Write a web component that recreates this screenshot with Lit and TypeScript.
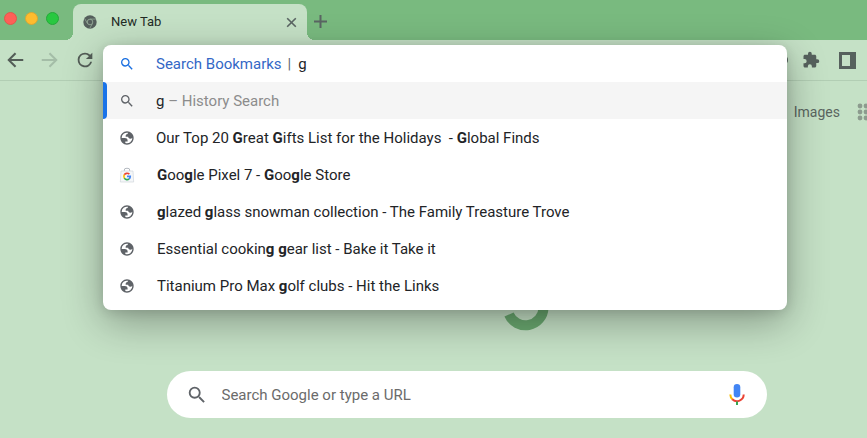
import { LitElement, html, css, svg } from "lit";
import { customElement } from "lit/decorators.js";

type Part = string | { b: string };
interface Suggestion {
  icon: "globe" | "store";
  indent: boolean;
  parts: Part[];
}

const SEARCH =
  "M15.5 14h-.79l-.28-.27A6.47 6.47 0 0 0 16 9.5 6.5 6.5 0 1 0 9.5 16c1.61 0 3.09-.59 4.23-1.57l.27.28v.79l5 4.99L20.49 19l-4.99-5zm-6 0C7.01 14 5 11.99 5 9.5S7.01 5 9.5 5 14 7.01 14 9.5 11.99 14 9.5 14z";
const BACK = "M21 10.8H7.83l5.59-5.39L11.8 3.8 3.6 12l8.2 8.2 1.61-1.61L7.83 13.2H21z";
const FORWARD = "M12.200 3.800l-1.610 1.610 5.580 5.390H3v2.400h13.170l-5.580 5.390 1.610 1.610L20.400 12z";
const RELOAD =
  "M17.65 6.35A7.96 7.96 0 0 0 12 4a8 8 0 1 0 7.73 10h-2.08A6 6 0 1 1 12 6c1.66 0 3.14.69 4.22 1.78L13 11h7V4l-2.35 2.35z";
const PUZZLE =
  "M20.5 11H19V7c0-1.1-.9-2-2-2h-4V3.5a2.5 2.5 0 0 0-5 0V5H4c-1.1 0-2 .9-2 2v3.8h1.5a2.7 2.7 0 0 1 0 5.4H2V20c0 1.1.9 2 2 2h3.8v-1.5a2.7 2.7 0 0 1 5.4 0V22H17c1.1 0 2-.9 2-2v-4h1.5a2.5 2.5 0 0 0 0-5z";
const GLOBE =
  "M12 2c5.52 0 10 4.48 10 10s-4.48 10-10 10S2 17.52 2 12 6.48 2 12 2zM4 12h4.4c3.407.022 4.922 1.73 4.543 5.127H9.488v2.47a8.004 8.004 0 0 0 10.498-8.083C19.327 12.504 18.332 13 17 13c-2.137 0-3.206-.916-3.206-2.75h-3.748c-.274-2.728.683-4.092 2.87-4.092 0-.975.327-1.597.811-1.97A8.004 8.004 0 0 0 4 12z";

const icon = (d: string) =>
  html`<svg class="icon" viewBox="0 0 24 24" aria-hidden="true"><path fill-rule="evenodd" d=${d} /></svg>`;

const storeIcon = html`<svg class="icon" viewBox="0 0 24 24" aria-hidden="true">
  <path d="M8 6V4.5A2.5 2.5 0 0 1 10.5 2h3A2.5 2.5 0 0 1 16 4.5V6" fill="none" stroke="#b4b9c0" stroke-width="1.5" />
  <path d="M3 6h18l1 16.500H2z" fill="#f5f7f9" stroke="#cfd4da" />
  <g fill="none" stroke-width="2.6">
    <path d="M15.5 10.8A4.8 4.8 0 0 0 8 11.7" stroke="#ea4335" />
    <path d="M8 11.7a4.8 4.8 0 0 0 0 5" stroke="#fbbc04" />
    <path d="M8 16.7a4.8 4.8 0 0 0 7.2 1" stroke="#34a853" />
    <path d="M15.2 17.7a4.8 4.8 0 0 0 1.6-3.5H12" stroke="#4285f4" />
  </g>
</svg>`;

const SUGGESTIONS: Suggestion[] = [
  { icon: "globe", indent: false, parts: ["Our Top 20 ", { b: "G" }, "reat ", { b: "G" }, "ifts List for the Holidays \u00a0- ", { b: "G" }, "lobal Finds"] },
  { icon: "store", indent: true, parts: [{ b: "G" }, "oo", { b: "g" }, "le Pixel 7 - ", { b: "G" }, "oo", { b: "g" }, "le Store"] },
  { icon: "globe", indent: true, parts: [{ b: "g" }, "lazed ", { b: "g" }, "lass snowman collection - The Family Treasture Trove"] },
  { icon: "globe", indent: true, parts: ["Essential cookin", { b: "g" }, " ", { b: "g" }, "ear list - Bake it Take it"] },
  { icon: "globe", indent: true, parts: ["Titanium Pro Max ", { b: "g" }, "olf clubs - Hit the Links"] },
];

const base = css`
  :host, * { box-sizing: border-box; }
  button { border: 0; padding: 0; margin: 0; background: none; color: inherit; font: inherit; display: flex; flex: none; }
  input { border: 0; padding: 0; margin: 0; outline: 0; background: none; font: inherit; color: inherit; min-width: 0; flex: 1; }
  .icon { display: block; width: 100%; height: 100%; fill: currentColor; }
`;

@customElement("tab-strip")
export class TabStrip extends LitElement {
  static styles = [base, css`
    :host { display: flex; height: 40px; padding-top: 4px; background: #79ba7f; color: #5a6563; }
    .lights { display: flex; gap: 8px; width: 73px; padding: 8px 0 0 4px; }
    .light { width: 13px; height: 13px; border-radius: 50%; border: 1px solid; }
    .red { background: #fe5f57; border-color: #e2574b; }
    .amber { background: #febc2e; border-color: #dba732; }
    .green { background: #28c840; border-color: #24a939; }
    .tab { position: relative; display: flex; align-items: center; width: 234px; padding: 0 10px; border-radius: 8px 8px 0 0; background: #c5e1c6; }
    .tab::before, .tab::after { content: ""; position: absolute; bottom: 0; width: 8px; height: 8px; }
    .tab::before { right: 100%; background: radial-gradient(circle at 0 0, transparent 8px, #c5e1c6 8px); }
    .tab::after { left: 100%; background: radial-gradient(circle at 100% 0, transparent 8px, #c5e1c6 8px); }
    .favicon { width: 14px; height: 14px; }
    .title { flex: 1; margin-left: 14px; font-size: 13px; line-height: 20px; color: #222b25; }
    .close { width: 11px; height: 11px; }
    .add { width: 13px; height: 13px; margin: 11px 0 0 7px; }
    .line { fill: none; stroke: currentColor; stroke-width: 2; }
    .cross { fill: none; stroke: currentColor; stroke-width: 1.6; }
  `];
  render() {
    return html`
      <div class="lights">
        <span class="light red"></span><span class="light amber"></span><span class="light green"></span>
      </div>
      <div class="tab">
        <svg class="favicon" viewBox="0 0 24 24" aria-hidden="true">
          <circle cx="12" cy="12" r="11.5" fill="#545f5c" />
          <circle cx="12" cy="12" r="4.8" fill="#545f5c" stroke="#93a997" stroke-width="1.6" />
          <path d="M12 7h10M7.7 14.5L3 6.500M16.3 14.5L11.500 23" stroke="#93a997" stroke-width="1.400" />
        </svg>
        <span class="title">New Tab</span>
        <button class="close" aria-label="Close tab">
          <svg class="icon" viewBox="0 0 11 11"><path class="cross" d="M1.200 1.200l8.600 8.600M9.800 1.200l-8.600 8.600" /></svg>
        </button>
      </div>
      <button class="add" aria-label="New tab">
        <svg class="icon" viewBox="0 0 13 13"><path class="line" d="M6.5 0v13M0 6.5h13" /></svg>
      </button>`;
  }
}

@customElement("omnibox-popup")
export class OmniboxPopup extends LitElement {
  static styles = [base, css`
    :host { display: block; padding-bottom: 6px; overflow: hidden; border-radius: 8px; background: #fff; color: #222427; font-size: 15px; line-height: 20px;
      box-shadow: 0 12px 40px rgba(0, 0, 0, 0.32), 0 2px 12px rgba(0, 0, 0, 0.12); }
    .row { position: relative; display: flex; align-items: center; height: 37px; padding: 0 17px 0 16px; white-space: pre; }
    .glyph { flex: none; width: 16px; height: 16px; margin-right: 21px; color: #5f6368; }
    .indent { padding-left: 1px; }
    .keyword { color: #3367c6; }
    .blue { color: #1a6fe0; }
    .bar { margin: 0 7px 0 6px; color: #5c6472; }
    .list { list-style: none; margin: 0; padding: 0; }
    .active { background: #f5f5f5; }
    .active::before { content: ""; position: absolute; left: 0; top: 0; bottom: 0; width: 4px; border-radius: 0 4px 4px 0; background: #1a73e8; }
    .muted { color: #8c8c8c; }
    b { font-weight: 700; }
  `];
  render() {
    return html`
      <div class="row">
        <span class="glyph blue">${icon(SEARCH)}</span>
        <label class="keyword" for="query">Search Bookmarks</label><span class="bar">|</span>
        <input id="query" type="text" value="g" />
      </div>
      <ul class="list">
        <li class="row active"><span class="glyph">${icon(SEARCH)}</span><span>g <span class="muted">– History Search</span></span></li>
        ${SUGGESTIONS.map((s) => html`<li class="row"><span class="glyph">${s.icon === "globe" ? icon(GLOBE) : storeIcon}</span><span class=${s.indent ? "indent" : ""}>${s.parts.map((p) => typeof p === "string" ? p : html`<b>${p.b}</b>`)}</span></li>`)}
      </ul>`;
  }
}

@customElement("browser-toolbar")
export class BrowserToolbar extends LitElement {
  static styles = [base, css`
    :host { position: relative; z-index: 1; display: flex; align-items: center; height: 41px; border-bottom: 1px solid #b2ceb4; background: #c5e1c6; color: #535d57; }
    .nav { display: flex; align-items: center; gap: 13px; width: 103px; padding-left: 4px; }
    .nav button { width: 22px; height: 22px; }
    .nav .off { color: #a4bda7; }
    .slot { position: relative; flex: 1; align-self: stretch; }
    .slot::before { content: ""; position: absolute; right: -1px; top: 16px; width: 8px; height: 8px; border-radius: 50%; background: #56615d; }
    .popup { position: absolute; top: 5px; left: 0; right: 0; }
    .actions { display: flex; align-items: center; gap: 19px; width: 80px; padding-left: 15px; color: #56615d; }
    .puzzle { width: 18px; height: 18px; }
    .panel { width: 17px; height: 17px; }
  `];
  render() {
    return html`
      <nav class="nav" aria-label="Navigation">
        <button aria-label="Back">${icon(BACK)}</button>
        <button class="off" aria-label="Forward">${icon(FORWARD)}</button>
        <button aria-label="Reload">${icon(RELOAD)}</button>
      </nav>
      <div class="slot"><omnibox-popup class="popup"></omnibox-popup></div>
      <div class="actions">
        <button class="puzzle" aria-label="Extensions">${icon(PUZZLE)}</button>
        <button class="panel" aria-label="Side panel">
          <svg class="icon" viewBox="0 0 17 17"><path fill-rule="evenodd" d="M0 0h17v17H0zM3 3v11h8V3z" /></svg>
        </button>
      </div>`;
  }
}

@customElement("new-tab-page")
export class NewTabPage extends LitElement {
  static styles = [base, css`
    :host { display: block; flex: 1; overflow: hidden; background: #c5e1c6; }
    .top { display: flex; align-items: center; justify-content: flex-end; gap: 17px; height: 62px; }
    .link { color: #5a6560; font-size: 14px; line-height: 20px; text-decoration: none; }
    .apps { width: 16px; height: 16px; margin-right: -6px; color: #8c9b8e; }
    .center { display: flex; flex-direction: column; align-items: center; gap: 40px; padding: 68px 34px 20px 100px; }
    .logo { width: 272px; height: 120px; color: #69a76f; }
    .box { display: flex; align-items: center; width: 100%; max-width: 600px; height: 47px; padding: 0 19px; border-radius: 24px; background: #fff; color: #5f6368; font-size: 15px; line-height: 24px; }
    .lens { width: 22px; height: 22px; margin-right: 14px; }
    .box input::placeholder { color: #6b6b6b; opacity: 1; }
    .mic { width: 22px; height: 22px; }
    svg { overflow: visible; }
  `];
  render() {
    const dots = [2, 8, 14].flatMap((y) => [3, 9, 15].map((x) => svg`<circle cx=${x} cy=${y} r="2.4" />`));
    return html`
      <header class="top">
        <a class="link" href="#images">Images</a>
        <button class="apps" aria-label="Apps"><svg class="icon" viewBox="0 0 16 16">${dots}</svg></button>
      </header>
      <main class="center">
        <svg class="logo" viewBox="0 0 272 120" role="img" aria-label="Logo">
          <path d="M178 103.5a18 18 0 0 0 34.5-6.5V60" fill="none" stroke="currentColor" stroke-width="10" />
        </svg>
        <form class="box" role="search">
          <span class="lens">${icon(SEARCH)}</span>
          <input type="text" aria-label="Search" placeholder="Search Google or type a URL" />
          <button class="mic" type="button" aria-label="Search by voice">
            <svg class="icon" viewBox="0 0 22 22">
              <rect x="7.7" y="0" width="6.6" height="13.5" rx="3.3" fill="#4285f4" />
              <g fill="none" stroke-width="2">
                <path d="M4.3 10.5a6.7 6.7 0 0 0 2.3 5" stroke="#fbbc04" />
                <path d="M6.3 15.2a6.7 6.7 0 0 0 11.4-4.7" stroke="#ea4335" />
                <path d="M11 17.5v3.5" stroke="#34a853" />
              </g>
            </svg>
          </button>
        </form>
      </main>`;
  }
}

@customElement("app-root")
export class AppRoot extends LitElement {
  static styles = css`
    :host { display: flex; flex-direction: column; min-height: 100vh; overflow: hidden; font-family: Roboto, "Liberation Sans", sans-serif; background: #c5e1c6; }
  `;
  render() {
    return html`<tab-strip></tab-strip><browser-toolbar></browser-toolbar><new-tab-page></new-tab-page>`;
  }
}
